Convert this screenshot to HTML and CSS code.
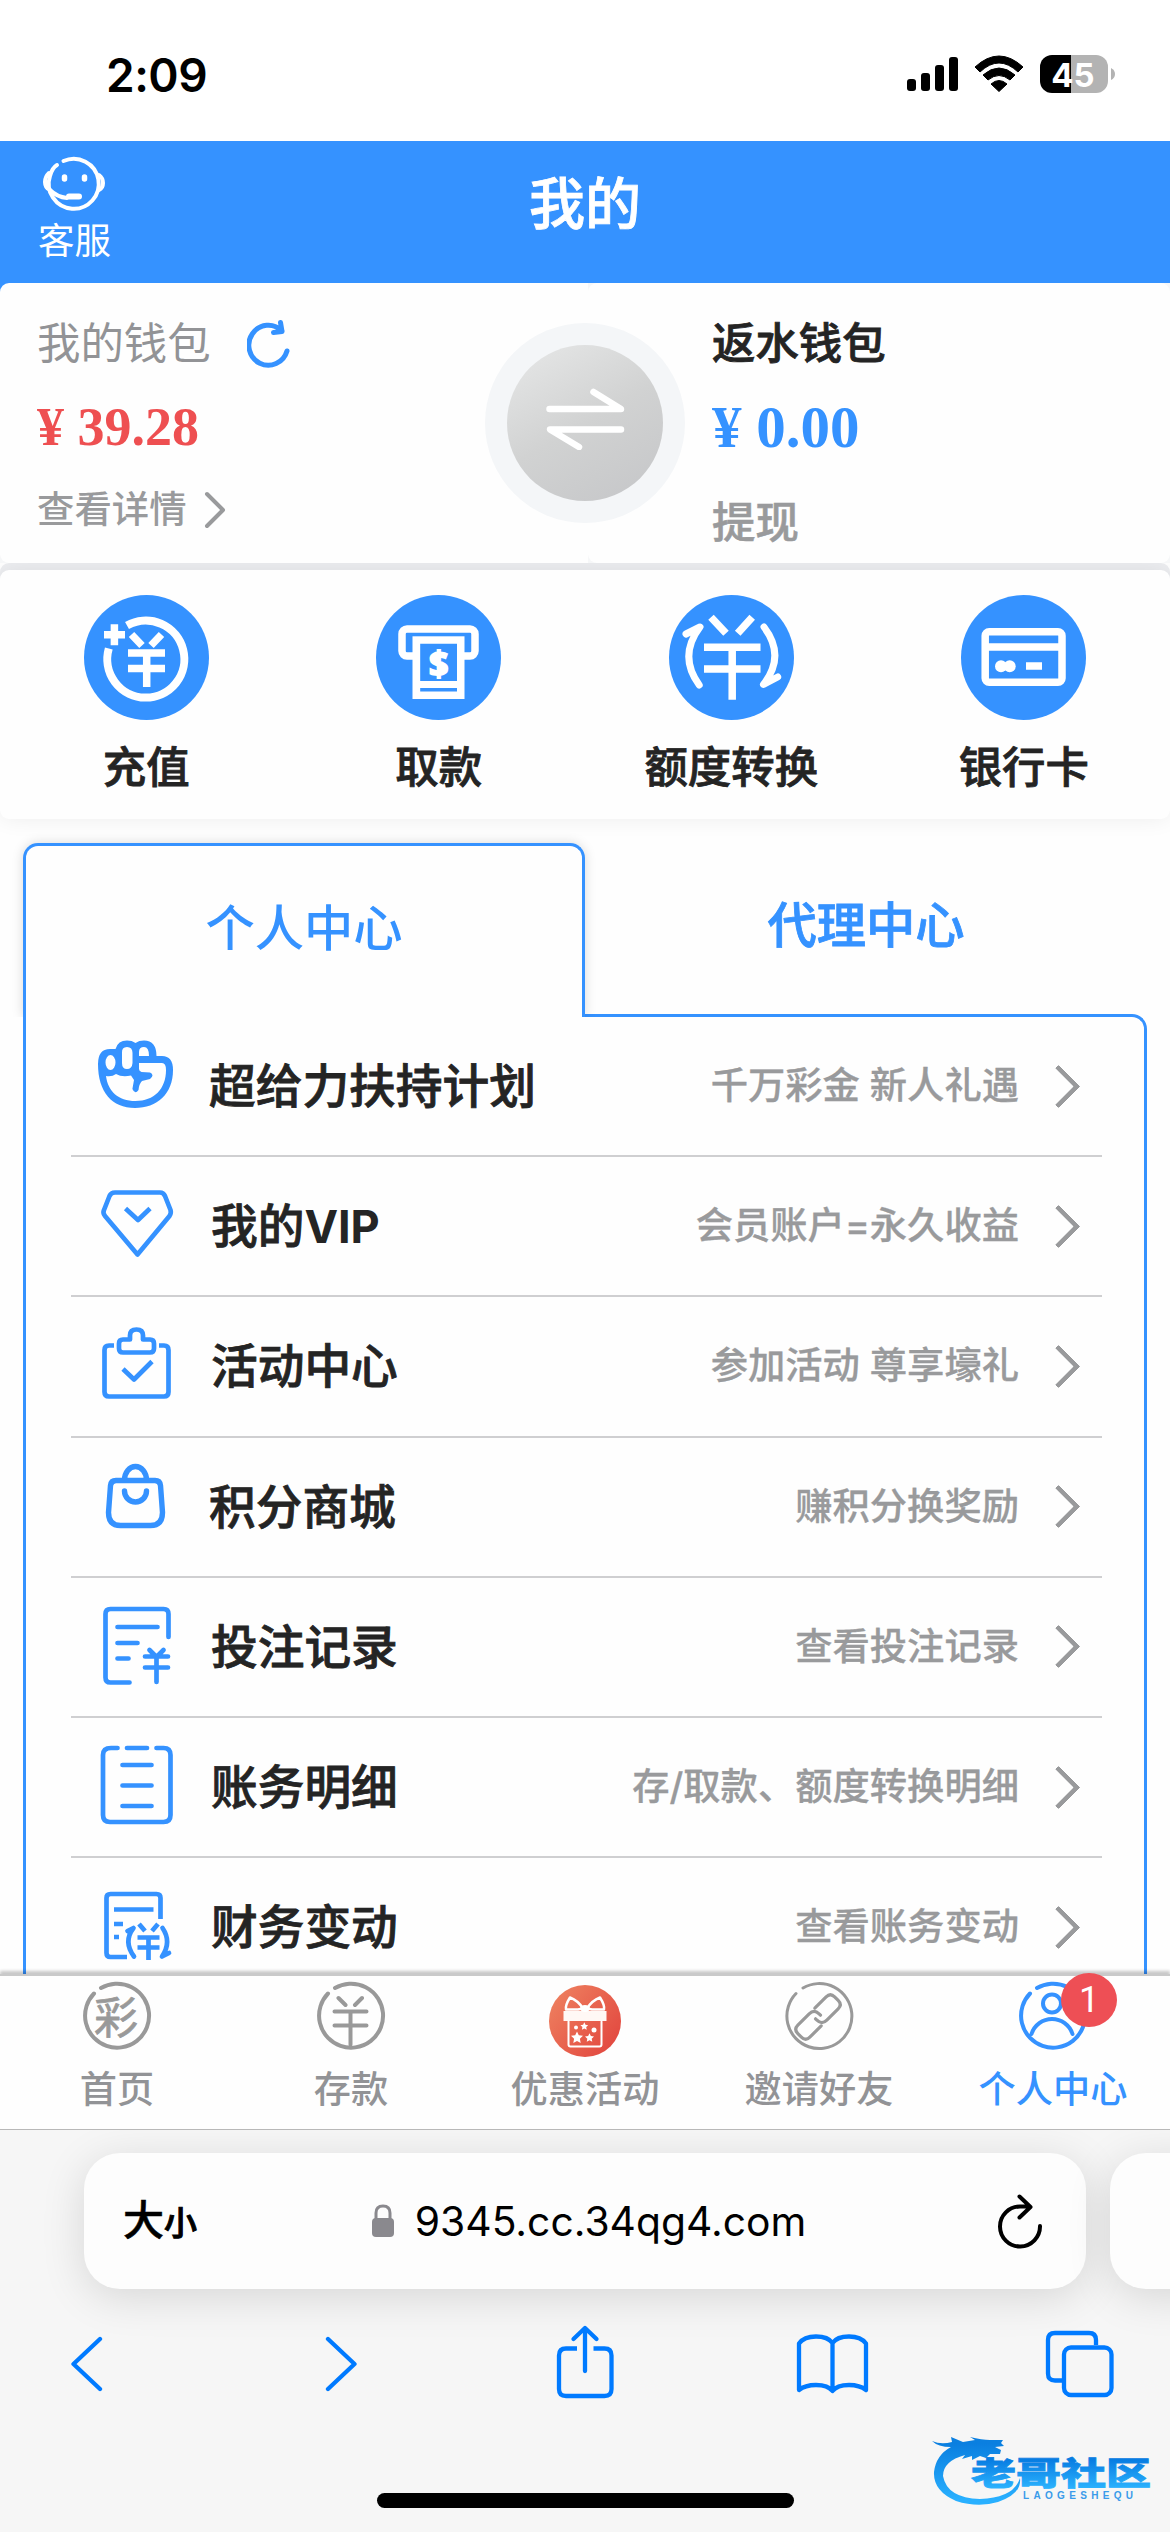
FILE: index.html
```html
<!DOCTYPE html>
<html lang="zh-CN">
<head>
<meta charset="utf-8">
<title>我的</title>
<link rel="stylesheet" href="styles.css">
</head>
<body>
<div class="status">
  <div class="time">2:09</div>
  <svg class="status-icons" width="210" height="40" viewBox="906 54 210 40">
    <g><rect x="907" y="79" width="9" height="12" rx="3"/><rect x="921" y="73" width="9" height="18" rx="3"/><rect x="935" y="65" width="9" height="26" rx="3"/><rect x="949" y="57" width="9" height="34" rx="3"/></g>
    <path d="M975 67Q999 45 1023 67L1018 72Q999 54 980 72Z M983 75Q999 61 1015 75L1010 80Q999 71 988 80Z M991 84Q999 77 1007 84L999 91.500Z" stroke="#000" stroke-width="1" stroke-linejoin="round"/>
    <clipPath id="batt"><rect x="1040" y="55" width="68" height="38" rx="12"/></clipPath>
    <g clip-path="url(#batt)"><rect x="1040" y="55" width="31" height="38"/><rect x="1071" y="55" width="37" height="38" fill="#b3b3b3"/></g>
    <path d="M1111 68q4 2 4 6t-4 6z" fill="#b3b3b3"/>
    <text class="batt-text" x="1073" y="86.500" text-anchor="middle">45</text>
  </svg>
</div>

<header class="header">
  <div class="service">
    <svg width="72" height="62" viewBox="38 152 72 62" fill="none" stroke="#fff" stroke-width="4" stroke-linecap="round">
      <path d="M63.500 161A25 25 0 1 1 50 176Q52 168 57 165"/>
      <path d="M49 173q-4 4-4 9 0 6 5 8 7 7 17 8M99 175q4 3 4 8t-4 7"/>
      <path d="M69 196.500h10" stroke-width="6"/>
      <path d="M64.500 177v2M84.500 177v2" stroke-width="5.500"/>
    </svg>
    <span>客服</span>
  </div>
  <h1>我的</h1>
</header>

<section class="wallet">
  <div class="card mine">
    <div class="name">我的钱包
      <svg width="44" height="50" viewBox="246 319 44 50" fill="none" stroke="#3592ff" stroke-width="5" stroke-linecap="round" stroke-linejoin="round"><path d="M286 352A19.500 20 0 1 1 281 332M279.500 323.500L281 332.500L272.500 333.500"/></svg>
    </div>
    <div class="amount">¥ 39.28</div>
    <div class="detail">查看详情
      <svg width="24" height="38" viewBox="0 0 24 38" fill="none" stroke="#999a9c" stroke-width="4" stroke-linecap="round" stroke-linejoin="round"><path d="M4 3L20 19L4 35"/></svg>
    </div>
  </div>
  <div class="card rebate">
    <div class="name">返水钱包</div>
    <div class="amount">¥ 0.00</div>
    <div class="withdraw">提现</div>
  </div>
  <div class="swap"><div class="swap-inner">
    <svg width="80" height="62" viewBox="545 388 80 62" fill="none" stroke="#fff" stroke-width="6.500" stroke-linecap="round" stroke-linejoin="round"><path d="M549.500 409H621L593.500 392M621 429.500H550L579 447"/></svg>
  </div></div>
</section>

<section class="actions">
  <div class="action">
    <svg width="125" height="125" viewBox="0 0 125 125" fill="none" stroke="#fff" stroke-width="8"><circle cx="62.500" cy="62.500" r="62.500" fill="#3592ff" stroke="none"/>
      <path d="M43 30.500A38.500 38.500 0 1 1 24.800 53.500"/><path d="M20 39.700h21M30.400 29.300v21" stroke-width="7.500"/><path d="M47.500 39.500L58 50.500M77.500 39.500L67 50.500M44 58h37M44 73.400h37M62.700 58v34" stroke-width="7.500"/></svg>
    <span>充值</span>
  </div>
  <div class="action">
    <svg width="125" height="125" viewBox="0 0 125 125"><circle cx="62.500" cy="62.500" r="62.500" fill="#3592ff"/>
      <rect x="26" y="34" width="73" height="27" rx="5" fill="none" stroke="#fff" stroke-width="7.500"/><rect x="36.500" y="41.300" width="52" height="62.700" fill="#fff"/><path d="M44.200 48.700h36.800v37.300h-36.800zM44.200 93h36.800v3.500h-36.800z" fill="#3592ff"/><text class="dollar" x="62.700" y="81" text-anchor="middle">$</text></svg>
    <span>取款</span>
  </div>
  <div class="action">
    <svg width="125" height="125" viewBox="0 0 125 125" fill="none" stroke="#fff" stroke-width="7.500"><circle cx="62.500" cy="62.500" r="62.500" fill="#3592ff" stroke="none"/>
      <path d="M42 22.300L57 38.300M83.200 22.300L68.700 38.300M35 52.300h56.500M35 74h56.500M63.200 52.300v52.400"/><path d="M30.200 90Q9 61 31 32L17 39M95 32Q117 61 94.500 89.500L108.700 82" stroke-linecap="round" stroke-linejoin="round" stroke-width="7"/></svg>
    <span>额度转换</span>
  </div>
  <div class="action">
    <svg width="125" height="125" viewBox="0 0 125 125" fill="none" stroke="#fff" stroke-width="7.500"><circle cx="62.500" cy="62.500" r="62.500" fill="#3592ff" stroke="none"/>
      <rect x="24.200" y="36.800" width="76.800" height="50.500" rx="4"/><path d="M24 52h77M65 71h16"/><g fill="#fff" stroke="none"><circle cx="40" cy="71.300" r="6"/><circle cx="48.700" cy="71.300" r="6"/></g></svg>
    <span>银行卡</span>
  </div>
</section>

<div class="tabs">
  <div class="tab active">个人中心</div>
  <div class="tab other">代理中心</div>
</div>

<main class="list">
  <div class="row first">
    <svg class="ico" viewBox="94 1017 84 140">
      <path class="solid" fill-rule="evenodd" d="M98 1065Q98 1050 110 1050H115.500Q118 1041.600 127 1041.600Q132 1041.600 135.500 1044Q139 1041.600 144 1041.600Q156.500 1042 156.500 1057H162Q173 1057 173 1071C173 1095 157 1109 135 1109C112 1109 98 1093 98 1065ZM105.500 1063.500a5 7.500 0 0 0 10 0a5 7.500 0 0 0 -10 0ZM122 1054v10q0 6 5 6t5.500-6v-10q0-6-5.500-6t-5 6ZM139 1057v-4q0-5 5-5t5 9ZM106 1077Q112 1078 116 1075Q122 1078.500 131 1076.500L134 1081L132.400 1090Q135 1096 138.500 1091Q139 1085 142 1082L150 1080Q155 1076 150 1073.500L141.500 1073Q139 1072 139 1070V1064H162Q166 1064 166 1071C166 1090 154 1102 135.500 1102C118 1102 108 1092 106 1077Z"/></svg>
    <b>超给力扶持计划</b><span>千万彩金 新人礼遇</span><i></i>
  </div>
  <div class="row">
    <svg class="ico" viewBox="94 1157 84 140"><path d="M115 1193.500H160Q163.500 1193.500 165 1197L170.500 1211Q171.500 1214 169.500 1217L137.500 1255.500L105 1217Q102.500 1214 104 1211L109.500 1197Q111 1193.500 115 1193.500ZM125.500 1209.500L138 1221L150 1209.500"/></svg>
    <b>我的<strong>VIP</strong></b><span>会员账户=永久收益</span><i></i>
  </div>
  <div class="row">
    <svg class="ico" viewBox="94 1297 84 140"><path d="M114 1346.500h-5q-4.500 0-4.500 4.500v42q0 4.500 4.500 4.500h55q4.500 0 4.500-4.500v-42q0-4.500-4.500-4.500h-5M123 1340.500h7v-4q0-6 6.500-6t6.500 6v4h7q4 0 4 4v5q0 4-4 4h-27q-4 0-4-4v-5q0-4 4-4zM123 1370L134 1380.500L152 1362.500"/></svg>
    <b>活动中心</b><span>参加活动 尊享壕礼</span><i></i>
  </div>
  <div class="row bag">
    <svg class="ico" viewBox="94 1437 84 140"><path d="M116 1480.500h39q5 0 5.500 5l2 27q0 13-12 13h-30q-12 0-12-13l2-27q.5-5 5.500-5zM124.500 1480a11 13.500 0 0 1 22 0M124.500 1491a11 11 0 0 0 22 0" stroke-linecap="round"/></svg>
    <b>积分商城</b><span>赚积分换奖励</span><i></i>
  </div>
  <div class="row">
    <svg class="ico" viewBox="94 1577 84 140" stroke-linecap="round"><path d="M168.500 1637v-23q0-5-5-5h-53q-5 0-5 5v63.500q0 5 5 5h19M117.500 1627h40M117.500 1643h20M117.500 1658.500h11M145 1656.500h23M145 1667.500h23M156.500 1657v25M149.500 1650l7 7 7-7"/></svg>
    <b>投注记录</b><span>查看投注记录</span><i></i>
  </div>
  <div class="row">
    <svg class="ico" viewBox="94 1718 84 140" stroke-linecap="round"><path d="M117.500 1749h-6.500q-8 0-8 7v60q0 7 7 7h53.500q7 0 7-7v-60q0-7-7-7h-7M127 1749h20M122.500 1766h29M122.500 1786.500h29M122.500 1807h29"/></svg>
    <b>账务明细</b><span>存/取款、额度转换明细</span><i></i>
  </div>
  <div class="row">
    <svg class="ico" viewBox="94 1858 84 140"><path d="M160.500 1920v-21q0-4-4-4h-46q-4 0-4 4v55q0 4 4 4h16.500M114 1910.500h39.500M114 1925h9M114 1938h5M139 1925l6 7M158 1925l-6 7M137.500 1938.500h22M137.500 1948.500h22M148.500 1939v22"/><path d="M134 1957.500q-11-15-.5-28.500l-6 3M162.500 1929q9.500 14-.5 28.500l7-3.500" stroke-linecap="round"/></svg>
    <b>财务变动</b><span>查看账务变动</span><i></i>
  </div>
</main>

<nav class="nav">
  <div class="item">
    <svg class="nico" viewBox="-42 -42 84 84"><path d="M-16 -33A32 32 0 1 1 -23 -27.500"/><text class="cai" x="-1" y="13" text-anchor="middle">彩</text></svg>首页</div>
  <div class="item">
    <svg class="nico" viewBox="-42 -42 84 84"><path d="M-16 -33A32 32 0 1 1 -23 -27.500M-12.500 -23l7 7M11 -23l-7 7M-16.500 -9.500h32M-16.500 4.500h32M-.5 -9.500v33"/></svg>存款</div>
  <div class="item">
    <svg class="nico gift" viewBox="-42 -42 84 84"><defs><linearGradient id="red" x2="1" y2=".8"><stop stop-color="#ef8562"/><stop offset="1" stop-color="#e2473f"/></linearGradient></defs><circle cy="0" r="36" fill="url(#red)" stroke="none"/>
      <g transform="translate(0 1.500)"><path d="M-2 -14Q-7 -22 -15 -25Q-20 -17 -19 -13L-7 -13ZM2 -14Q7 -22 15 -25Q20 -17 19 -13L7 -13Z" stroke-width="2.500"/><path d="M-21.500 -11.500h43v10h-43z" fill="#fff8f5" stroke="none"/><ellipse cy="-14" rx="5" ry="3.500" fill="#fff" stroke="none"/><path d="M-16.500 -1v23q0 2 2 2h29q2 0 2-2v-23" stroke-width="2"/>
      <g fill="#fff" stroke="none"><path id="st" d="M-8 9l1.800 3.800 4.200.5-3.100 2.900.8 4.200-3.700-2-3.700 2 .8-4.200-3.100-2.900 4.200-.5z"/><use href="#st" transform="translate(10.500 4) scale(.75)"/><use href="#st" transform="translate(4.500 -6) scale(.65)"/><circle cx="-9" cy="5" r="2"/><circle cx="9" cy="7.500" r="2.500"/></g></g></svg>优惠活动</div>
  <div class="item">
    <svg class="nico thin" viewBox="-42 -42 84 84"><path d="M-16 -33A32.500 32.500 0 1 1 -23 -27.500"/><g transform="translate(-1 -4) rotate(-45)" stroke-width="3.200"><path d="M-4 8.500H-20q-6 0-6-6v-5q0-6 6-6H-4q7 0 7 7v2"/><path d="M4 -8.500H20q6 0 6 6v5q0 6-6 6H4q-7 0-7-7v-2"/></g></svg>邀请好友</div>
  <div class="item on">
    <svg class="nico" viewBox="-42 -42 84 84"><path d="M-16 -33A32 32 0 1 1 -23 -27.500M-21.500 13a21.500 21.500 0 0 1 41 0"/><circle cx="-1" cy="-17.500" r="9"/></svg>个人中心
    <em class="badge">1</em></div>
</nav>

<footer class="browser">
  <div class="bars">
    <div class="address">
      <div class="size">大<small>小</small></div>
      <div class="url"><svg width="24" height="34" viewBox="0 0 24 34"><rect x="1" y="14" width="22" height="19" rx="4" fill="#8a898e"/><path d="M5 15V9q0-7 7-7t7 7v6" fill="none" stroke="#8a898e" stroke-width="3"/></svg>9345.cc.34qg4.com</div>
      <svg class="reload" width="48" height="58" viewBox="996 2190 48 58" fill="none" stroke="#000" stroke-width="4" stroke-linecap="round" stroke-linejoin="round"><path d="M1040 2224A20 20 0 1 1 1020 2204.500H1030M1019.500 2194.500L1030.500 2205L1019.500 2215.500"/></svg>
    </div>
    <div class="address next"></div>
  </div>
  <svg class="tools" width="1170" height="90" viewBox="0 2319 1170 90" fill="none" stroke="#007aff" stroke-width="4.300" stroke-linecap="round" stroke-linejoin="round">
    <path d="M100 2339L73.500 2364L100 2389M328 2339L354.500 2364L328 2389"/>
    <path d="M577 2348.500h-11q-7 0-7 7v33.500q0 7 7 7h38.500q7 0 7-7v-33.500q0-7-7-7h-11" stroke-linecap="butt"/><path d="M585 2371v-41M573.500 2339l11.500-11 11.500 11"/>
    <path d="M832.500 2343Q828 2336.500 816 2336.500Q804 2336.500 799 2343.500V2390Q805 2385 816 2385Q828 2385 832.500 2391Q837 2385 849 2385Q860 2385 866 2390V2343.500Q861 2336.500 849 2336.500Q837 2336.500 832.500 2343V2390"/>
    <path d="M1096 2345v-5q0-7-7-7h-34q-7 0-7 7v33.500q0 7 7 7h7" stroke-linecap="butt"/><rect x="1064" y="2347.500" width="47.500" height="47.500" rx="7"/>
  </svg>
  <div class="home"></div>
  <svg class="mark" width="230" height="76" viewBox="928 2434 230 76">
    <defs><linearGradient id="wm" gradientUnits="userSpaceOnUse" x1="0" y1="2444" x2="0" y2="2500"><stop stop-color="#0a7fe0"/><stop offset="1" stop-color="#29b0ff"/></linearGradient>
    <linearGradient id="wt" x2="0" y2="1"><stop offset=".25" stop-color="#087de2"/><stop offset=".9" stop-color="#2cb4ff"/></linearGradient></defs>
    <path fill="url(#wm)" d="M932 2441Q941 2445 952 2442L951 2437L963 2442L975 2440L970 2437Q982 2440 990 2440L1003 2440L1001 2443L1004 2446L995 2447L1001 2450L1000 2454L990 2454L986 2458L980 2456L972 2460L972 2456L962 2459L965 2455Q943 2461 943 2476Q947 2498 980 2499Q1014 2498 1020 2478Q1022 2494 998 2502Q978 2508 956 2501Q933 2491 934 2472Q936 2455 951 2447Q938 2447 932 2441Z"/>
    <text class="wm" transform="translate(971 2485) scale(1.430 1)" fill="url(#wt)" stroke="url(#wt)">老哥社区</text>
    <text class="wm-en" x="1023" y="2498.500" textLength="110" fill="#3a9bea">LAOGESHEQU</text>
  </svg>
</footer>
</body>
</html>
```
FILE: styles.css
```css
* { box-sizing: border-box; }
body {
  margin: 0;
  width: 1170px;
  height: 2532px;
  overflow: hidden;
  display: flex;
  flex-direction: column;
  background: #fefefe;
  color: #242424;
  font-family: Inter, "Noto Sans CJK SC", sans-serif;
}
svg { display: block; flex: none; }

.status {
  height: 141px;
  flex: none;
  display: flex;
  justify-content: space-between;
  padding: 54px 54px 0 106px;
  background: #fff;
}
.time { font-size: 46px; font-weight: 600; line-height: 42px; color: #000; letter-spacing: -0.5px; }
.batt-text { font: 700 33px Inter, sans-serif; fill: #fff; }

.header {
  height: 142px;
  flex: none;
  display: grid;
  grid-template-columns: 148px 1fr 148px;
  background: #3592ff;
  color: #fff;
}
.service { padding: 11px 0 0 38px; font-size: 36.500px; line-height: 55px; white-space: nowrap; }
.header h1 { margin: 0; text-align: center; font-size: 56px; font-weight: 500; line-height: 126px; -webkit-text-stroke: 0.8px; }

.wallet {
  position: relative;
  height: 280px;
  flex: none;
  display: flex;
  background: linear-gradient(#3592ff, #3592ff) 0 0 / 12px 12px no-repeat, #f6f7f8;
}
.card { background: #fefefe; padding-top: 30px; }
.mine { width: 588px; padding-left: 37px; border-radius: 9px 0 0 9px; }
.rebate { flex: 1; padding-left: 124px; border-radius: 9px; }
.name { display: flex; align-items: center; gap: 36px; font-size: 43.400px; line-height: 60px; height: 60px; color: #929396; }
.rebate .name { color: #242424; font-weight: 500; -webkit-text-stroke: 0.8px; }
.amount { margin-top: 24px; height: 60px; line-height: 60px; font-family: "Liberation Serif", serif; font-weight: 700; font-size: 54px; color: #ee4f51; }
.rebate .amount { font-size: 59px; color: #3592ff; }
.detail { display: flex; align-items: center; gap: 16px; margin-top: 23px; font-size: 37.400px; line-height: 60px; color: #999a9c; font-weight: 500; }
.withdraw { margin-top: 35px; font-size: 43.400px; line-height: 60px; color: #999a9c; font-weight: 500; -webkit-text-stroke: 0.6px; }
.swap {
  position: absolute;
  left: 485px;
  top: 40px;
  width: 200px;
  height: 200px;
  border-radius: 50%;
  background: #f4f6f8;
  display: grid;
  place-items: center;
}
.swap-inner {
  width: 156px;
  height: 156px;
  padding-bottom: 8px;
  border-radius: 50%;
  background: linear-gradient(150deg, #e5e6e6 5%, #d1d2d2 50%, #c6c7c9 95%);
  display: grid;
  place-items: center;
}

.actions {
  height: 249px;
  flex: none;
  margin-top: 7px;
  display: grid;
  grid-template-columns: repeat(4, 1fr);
  border-radius: 9px;
  background: #fefefe;
  box-shadow: 0 0 22px rgba(0, 0, 0, 0.07), 0 -7px 0 #ecedf0;
}
.action { display: flex; flex-direction: column; align-items: center; padding-top: 25px; }
.action span { margin-top: 17px; font-size: 43.400px; line-height: 60px; font-weight: 500; -webkit-text-stroke: 0.8px; }
.dollar { font: 700 34px "Noto Sans", sans-serif; fill: #fff; stroke: #fff; stroke-width: 2px; }

.tabs { position: relative; z-index: 1; display: flex; flex: none; height: 171px; margin: 24px 23px 0; }
.tab { width: 562px; text-align: center; font-size: 49.300px; font-weight: 500; line-height: 165px; color: #3592ff; }
.other { -webkit-text-stroke: 0.8px; }
.active {
  height: 174px;
  background: #fefefe;
  border: 3px solid #3592ff;
  border-bottom: 0;
  border-radius: 15px 15px 0 0;
  box-shadow: 0 0 12px rgba(0, 0, 0, 0.15);
  clip-path: inset(-12px -12px 0 -12px);
}

.list {
  flex: none;
  height: 960px;
  overflow: hidden;
  margin: 0 23px;
  padding: 0 42px 0 45px;
  border: 3px solid #3592ff;
  border-width: 3px 3px 0;
  border-radius: 0 15px 0 0;
}
.row {
  height: 140.200px;
  display: flex;
  align-items: center;
  padding: 0 20px 0 23px;
  border-bottom: 2px solid #cfcfd1;
  white-space: nowrap;
}
.ico { width: 84px; height: 140px; fill: none; stroke: #3592ff; stroke-width: 4.700px; stroke-linejoin: round; }
.solid { fill: #3592ff; stroke: none; }
.bag .ico { stroke-width: 5.400px; }
.row b { margin-left: 33px; font-size: 46.700px; font-weight: 500; line-height: 60px; -webkit-text-stroke: 0.8px; }
.row strong { font-weight: 700; font-size: 45px; -webkit-text-stroke: 0; }
.row.first b { margin-left: 31px; }
.row.bag b { margin-left: 31px; }
.row span { margin-left: auto; font-size: 37.300px; font-weight: 500; line-height: 60px; color: #999a9c; -webkit-text-stroke: 0.3px; }
.row i { width: 31px; height: 31px; margin: 0 8px 0 24px; border: solid #999a9c; border-width: 5px 5px 0 0; border-radius: 2px; transform: rotate(45deg); }

.nav {
  position: relative;
  z-index: 2;
  height: 155px;
  flex: none;
  display: flex;
  background: #fefefe;
  border-top: 2px solid #c9c9c9;
  box-shadow: 0 -3px 3px rgba(0, 0, 0, 0.22);
}
.item {
  position: relative;
  width: 234px;
  display: flex;
  flex-direction: column;
  align-items: center;
  padding-top: 3px;
  font-size: 37.200px;
  font-weight: 500;
  line-height: 53px;
  color: #929396;
}
.on { color: #3592ff; }
.nico { width: 84px; height: 84px; fill: none; stroke: #999; stroke-width: 4px; stroke-linecap: round; stroke-linejoin: round; }
.thin { stroke-width: 3px; }
.gift { stroke: #fff; }
.on .nico { stroke: #3592ff; }
.cai { font: 400 44px "Noto Sans CJK SC", sans-serif; fill: #999; stroke: #999; stroke-width: 0.8px; }
.badge {
  position: absolute;
  left: 125px;
  top: -3px;
  width: 56px;
  height: 54px;
  border-radius: 50%;
  background: #ee4f55;
  color: #fff;
  font: 400 36px/54px Roboto, sans-serif;
  text-align: center;
}

.browser { height: 403px; flex: none; position: relative; background: #f6f6f6; border-top: 1px solid #b8b8b8; overflow: hidden; }
.bars { display: flex; gap: 24px; padding: 23px 0 0 84px; }
.address {
  flex: none;
  width: 1002px;
  height: 136px;
  display: flex;
  align-items: center;
  justify-content: space-between;
  padding: 0 42px 0 39px;
  border-radius: 36px;
  background: #fdfdfd;
  color: #000;
  box-shadow: 0 8px 44px rgba(0, 0, 0, 0.13);
}
.size { width: 240px; font-size: 41px; font-weight: 500; line-height: 60px; -webkit-text-stroke: 0.6px; }
.size small { font-size: 33px; -webkit-text-stroke: 1px; }
.url { display: flex; align-items: center; gap: 20px; font-size: 40.800px; line-height: 60px; }
.reload { margin-left: 182px; }
.tools { margin-top: 30px; }
.home { width: 417px; height: 15px; margin: 84px auto 0; border-radius: 8px; background: #000; }
.mark { position: absolute; left: 928px; top: 304px; }
.wm { font: 900 31.500px "Noto Sans CJK SC", sans-serif; stroke-width: 0.8px; }
.wm-en { font: 700 10px "Liberation Sans", sans-serif; }
```
